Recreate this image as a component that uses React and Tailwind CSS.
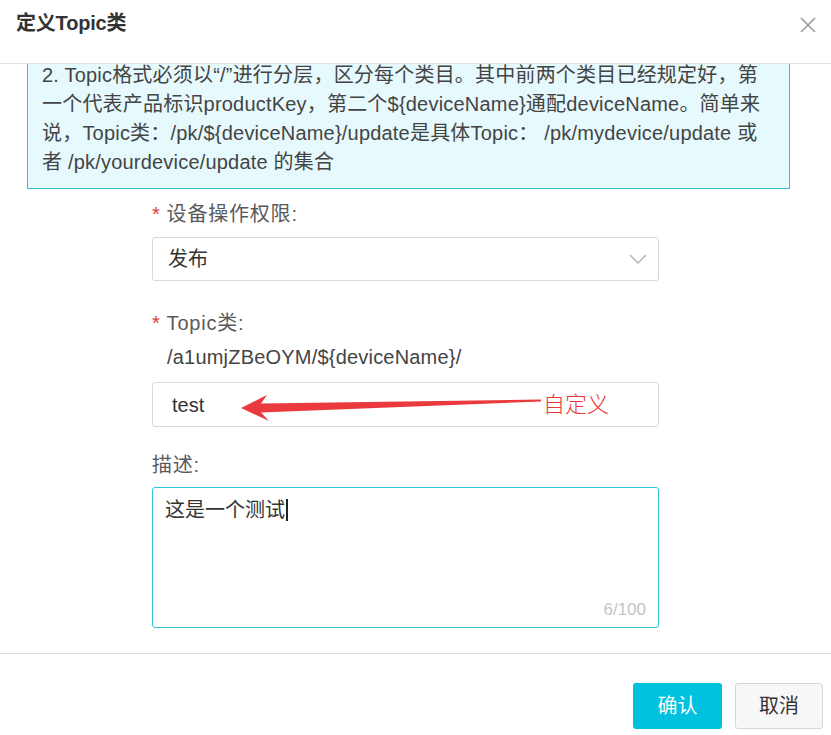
import { useState } from "react";

const font = { fontFamily: '"Liberation Sans", "Noto Sans CJK SC", sans-serif' };

function CloseIcon() {
  return (
    <svg width="18" height="18" viewBox="0 0 18 18" className="text-[#9a9a9a]">
      <path d="M2 2 L16 16 M16 2 L2 16" stroke="currentColor" strokeWidth="1.6" fill="none" />
    </svg>
  );
}

function Chevron() {
  return (
    <svg width="20" height="12" viewBox="0 0 20 12" className="text-[#b5b5b5]">
      <path d="M2 2 L10 10 L18 2" stroke="currentColor" strokeWidth="1.5" fill="none" />
    </svg>
  );
}

function Label({ required, children }) {
  return (
    <div className="flex h-[24px] items-center text-[20px] tracking-[0.8px] text-[#5a5a5a]">
      {required && <span className="mr-[6px] text-[#e4393c]">*</span>}
      <span>{children}</span>
    </div>
  );
}

export default function App() {
  const [desc] = useState("这是一个测试");

  return (
    <div className="flex h-[735px] w-[831px] flex-col overflow-hidden bg-white" style={font}>
      <header className="flex h-[64px] shrink-0 items-start justify-between border-b border-[#e2e2e2] pl-[16px] pr-[14px] pt-[8px]">
        <h1 className="text-[20px] font-bold tracking-[-0.2px] text-[#333]">定义Topic类</h1>
        <button className="mt-[8px]">
          <CloseIcon />
        </button>
      </header>

      <main className="flex-1 overflow-hidden">
        <div className="mx-[27px] mt-[-4px] w-[763px] border border-[#2cc1d8] bg-[#e6f9fc] px-[14px] pb-[11px] text-[20px] leading-[29px] tracking-[0.2px] whitespace-nowrap text-[#444]">
          <div>2. Topic格式必须以“/”进行分层，区分每个类目。其中前两个类目已经规定好，第</div>
          <div>一个代表产品标识productKey，第二个${"{"}deviceName{"}"}通配deviceName。简单来</div>
          <div>说，Topic类：/pk/${"{"}deviceName{"}"}/update是具体Topic： /pk/mydevice/update 或</div>
          <div>者 /pk/yourdevice/update 的集合</div>
        </div>

        <form className="ml-[152px] w-[507px]">
          <div className="mt-[13px]">
            <Label required>设备操作权限:</Label>
          </div>
          <div className="mt-[11px] flex h-[44px] items-center justify-between rounded-[3px] border border-[#d9d9d9] pl-[15px] pr-[10px] text-[20px] text-[#333]">
            <span>发布</span>
            <Chevron />
          </div>

          <div className="mt-[30px]">
            <Label required>Topic类:</Label>
          </div>
          <div className="mt-[10px] h-[24px] pl-[15px] text-[20px] leading-[24px] tracking-[0.2px] text-[#444]">
            /a1umjZBeOYM/${"{"}deviceName{"}"}/
          </div>
          <div className="relative mt-[13px] flex h-[45px] items-center rounded-[3px] border border-[#d9d9d9] pl-[19px] text-[20px] text-[#333]">
            <span>test</span>
            <svg className="absolute left-0 top-0" width="400" height="45" viewBox="0 0 400 45">
              <polygon
                points="88,25 114,12 108,20.5 388,16.5 388,18.5 108,29.5 116,38"
                fill="#ea3a3d"
              />
            </svg>
            <span className="absolute left-[390px] top-[5px] text-[22px] font-light text-[#e8383b]">自定义</span>
          </div>

          <div className="mt-[26px]">
            <Label>描述:</Label>
          </div>
          <div className="relative mt-[10px] h-[141px] rounded-[3px] border border-[#2fc4da] px-[12px] pt-[7px] text-[20px] text-[#333]">
            <span>{desc}</span>
            <span className="ml-[1px] inline-block h-[22px] w-[1.5px] translate-y-[4px] bg-[#222]" />
            <span className="absolute bottom-[5px] right-[12px] text-[17px] text-[#c4c4c4]">6/100</span>
          </div>
        </form>
      </main>

      <footer className="flex h-[82px] shrink-0 items-start justify-end gap-[13px] border-t border-[#dcdcdc] pr-[8px] pt-[29px]">
        <button className="h-[46px] w-[89px] rounded-[3px] bg-[#00c1de] text-[20px] text-white">确认</button>
        <button className="h-[46px] w-[88px] rounded-[3px] border border-[#d6d6d6] bg-[#f7f7f7] text-[20px] text-[#333]">取消</button>
      </footer>
    </div>
  );
}
